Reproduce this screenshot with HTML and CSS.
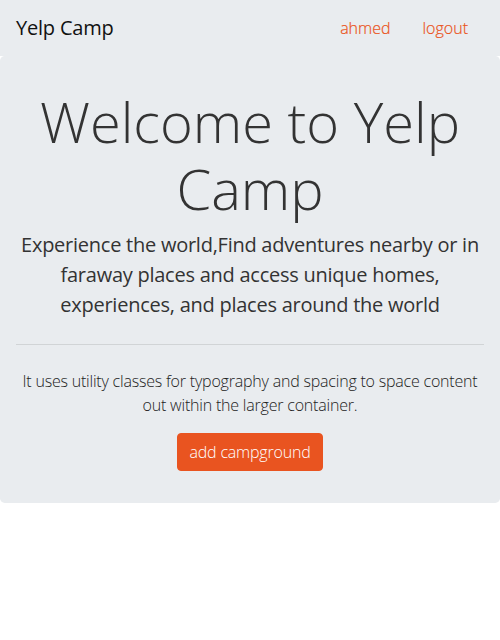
FILE: index.html
```html
<!DOCTYPE html>
<html lang="en">
<head>
<meta charset="utf-8">
<title>Yelp Camp</title>
<link rel="stylesheet" href="styles.css">
</head>
<body>
<nav class="navbar">
  <a class="brand" href="#">Yelp Camp</a>
  <ul class="nav">
    <li><a class="nav-link" href="#">ahmed</a></li>
    <li><a class="nav-link" href="#">logout</a></li>
  </ul>
</nav>
<div class="jumbotron">
  <h1 class="display">Welcome to Yelp Camp</h1>
  <p class="lead">Experience the world,Find adventures nearby or in faraway places and access unique homes, experiences, and places around the world</p>
  <hr class="divider">
  <p class="note">It uses utility classes for typography and spacing to space content out within the larger container.</p>
  <a class="btn" href="#">add campground</a>
</div>
</body>
</html>
```
FILE: styles.css
```css
* { box-sizing: border-box; }
html, body { margin: 0; padding: 0; background: #fff; }
body {
  font-family: "Open Sans", "Noto Sans", sans-serif;
  color: #333;
  font-size: 16px;
  line-height: 1.5;
}
.navbar {
  background: #e9ecef;
  height: 56px;
  padding: 8px 16px;
  display: flex;
  align-items: center;
  justify-content: space-between;
}
.brand {
  font-size: 20px;
  color: #111;
  text-decoration: none;
  line-height: 30px;
  letter-spacing: -0.2px;
}
.nav {
  list-style: none;
  margin: 0;
  padding: 0;
  display: flex;
}
.nav-link {
  display: block;
  padding: 8px 16px;
  color: #e95420;
  text-decoration: none;
  font-weight: 300;
  -webkit-text-stroke: 0.2px #e95420;
}
.jumbotron {
  background: #e9ecef;
  border-radius: 4.8px;
  padding: 32px 16px;
  text-align: center;
  margin-bottom: 32px;
}
.display {
  font-size: 56px;
  font-weight: 300;
  line-height: 1.2;
  margin: 0 0 8px;
  color: #333;
}
.lead {
  font-size: 20px;
  line-height: 30px;
  margin: 0 0 16px;
  letter-spacing: -0.25px;
}
.divider {
  border: 0;
  border-top: 1px solid rgba(0,0,0,0.1);
  margin: 24px 0;
}
.note {
  font-weight: 300;
  margin: 0 0 16px;
  letter-spacing: -0.2px;
  color: #222;
}
.btn {
  display: inline-block;
  background: #e95420;
  color: #fff;
  text-decoration: none;
  padding: 6px 12px;
  line-height: 24px;
  border: 1px solid #e95420;
  border-radius: 4px;
  font-weight: 300;
  letter-spacing: -0.2px;
}
```
